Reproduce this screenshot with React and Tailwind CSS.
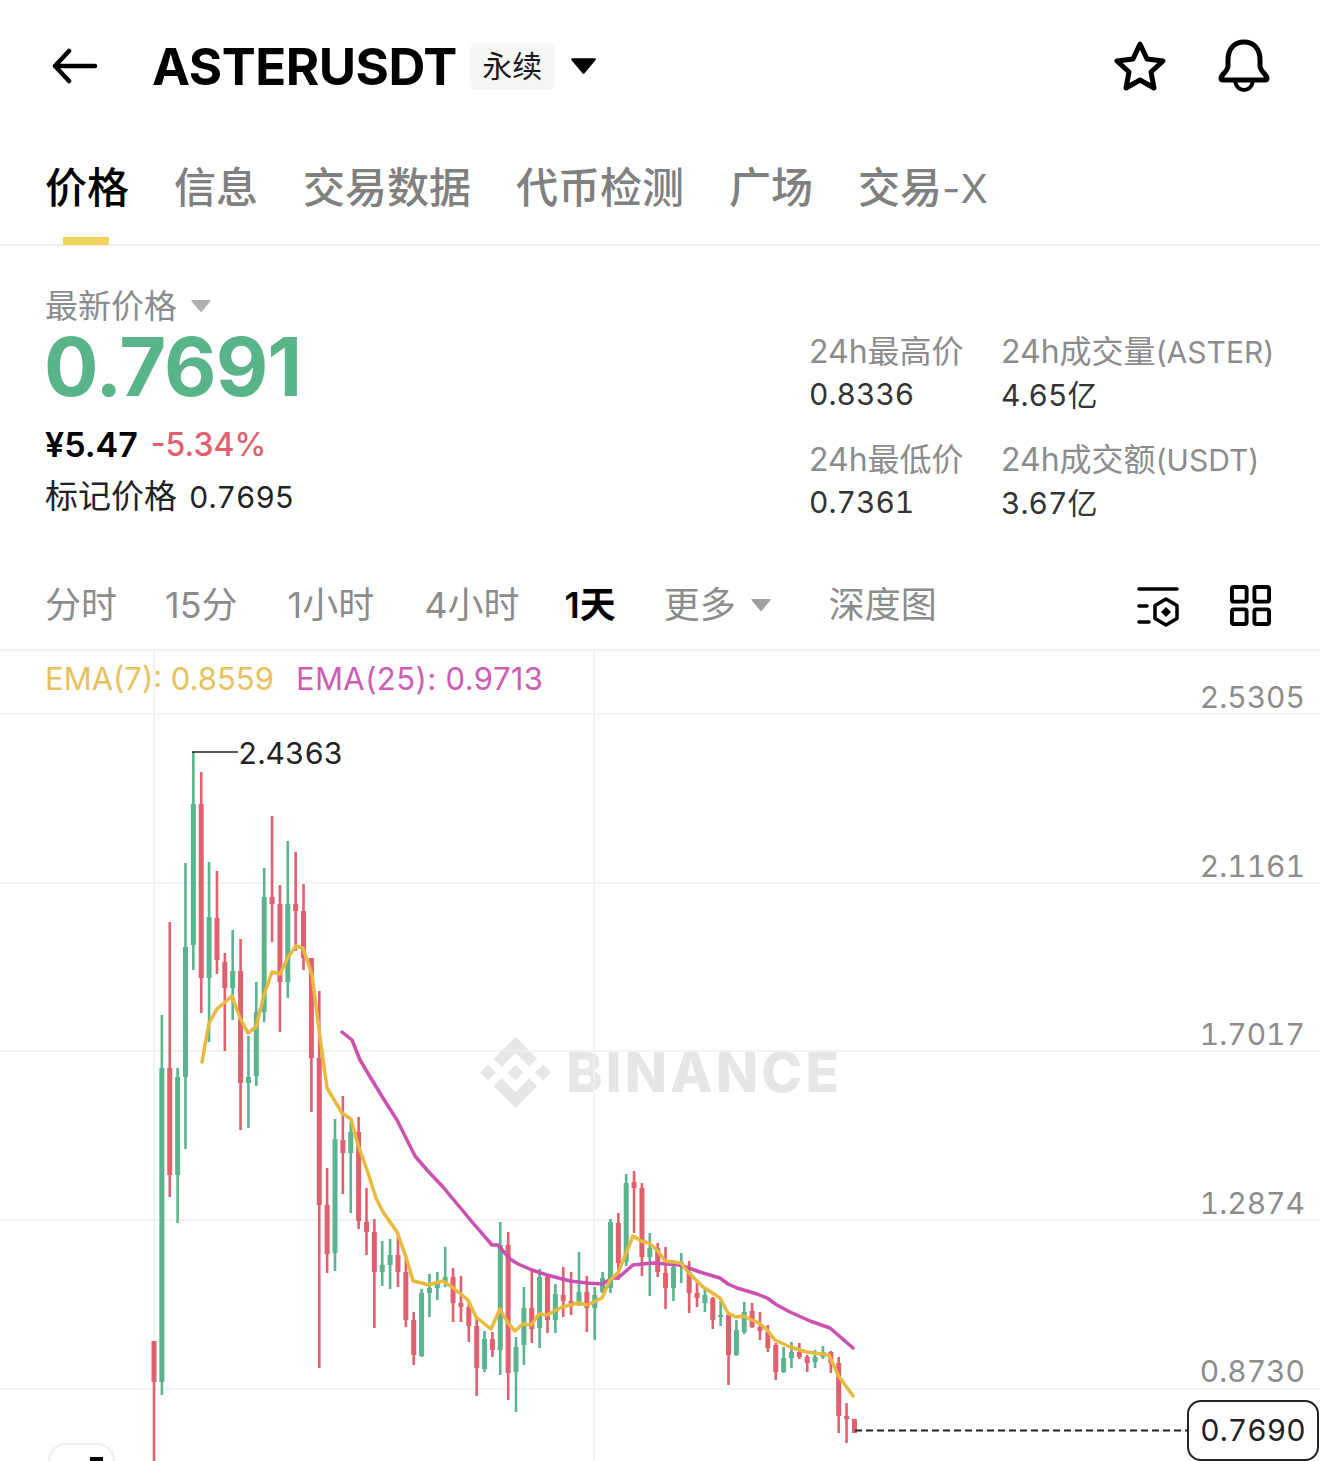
import React from "react";
import { SiBinance } from "react-icons/si";

const GREEN = "#5AB48E";
const RED = "#E0606E";

// [up?, wick top, body top, body bottom, wick bottom] in page pixels
const candles = [
  [0, 1341, 1341, 1382, 1480], [1, 1015, 1068, 1382, 1395], [0, 922, 1068, 1175, 1197], [1, 1068, 1077, 1175, 1223],
  [1, 863, 947, 1077, 1149], [1, 752, 804, 945, 970], [0, 772, 804, 978, 1013], [1, 862, 917, 978, 1042],
  [0, 871, 918, 960, 974], [0, 953, 962, 988, 1051], [1, 930, 971, 988, 1020], [0, 939, 971, 1083, 1130],
  [1, 1036, 1077, 1083, 1128], [1, 982, 1012, 1076, 1086], [1, 868, 897, 1012, 1022], [0, 816, 897, 904, 942],
  [0, 885, 904, 982, 1032], [1, 841, 904, 982, 998], [0, 852, 904, 911, 951], [0, 884, 911, 958, 970],
  [0, 958, 958, 1058, 1112], [0, 991, 1058, 1205, 1368], [0, 1168, 1205, 1254, 1273], [1, 1119, 1139, 1253, 1271],
  [0, 1096, 1140, 1153, 1194], [1, 1122, 1132, 1153, 1213], [0, 1117, 1132, 1221, 1229], [0, 1188, 1222, 1232, 1255],
  [0, 1219, 1232, 1272, 1328], [1, 1241, 1265, 1272, 1286], [1, 1239, 1255, 1265, 1289], [0, 1232, 1255, 1272, 1287],
  [0, 1258, 1272, 1320, 1327], [0, 1312, 1320, 1355, 1365], [1, 1289, 1293, 1356, 1357], [1, 1274, 1288, 1293, 1317],
  [1, 1272, 1282, 1288, 1300], [1, 1247, 1277, 1282, 1287], [0, 1268, 1277, 1303, 1322], [0, 1276, 1303, 1307, 1322],
  [0, 1302, 1307, 1326, 1342], [0, 1318, 1326, 1368, 1396], [1, 1331, 1339, 1369, 1372], [0, 1332, 1339, 1350, 1357],
  [1, 1222, 1245, 1350, 1375], [0, 1232, 1245, 1373, 1400], [1, 1337, 1347, 1372, 1412], [1, 1287, 1308, 1345, 1365],
  [0, 1270, 1308, 1329, 1343], [1, 1269, 1277, 1328, 1348], [0, 1275, 1277, 1320, 1333], [1, 1284, 1294, 1320, 1333],
  [0, 1267, 1295, 1301, 1317], [0, 1272, 1301, 1305, 1315], [1, 1252, 1292, 1305, 1306], [0, 1276, 1292, 1308, 1332],
  [1, 1287, 1295, 1308, 1340], [1, 1272, 1278, 1292, 1293], [1, 1219, 1222, 1288, 1293], [0, 1213, 1223, 1263, 1280],
  [1, 1174, 1183, 1262, 1266], [0, 1171, 1182, 1188, 1233], [0, 1183, 1188, 1257, 1276], [1, 1233, 1248, 1257, 1296],
  [0, 1243, 1248, 1272, 1277], [0, 1247, 1273, 1288, 1309], [1, 1260, 1267, 1288, 1301], [1, 1253, 1262, 1267, 1283],
  [0, 1261, 1272, 1293, 1313], [0, 1282, 1293, 1298, 1307], [1, 1287, 1295, 1303, 1312], [0, 1297, 1298, 1320, 1329],
  [1, 1301, 1315, 1316, 1326], [0, 1313, 1315, 1355, 1385], [1, 1320, 1330, 1355, 1356], [1, 1302, 1312, 1332, 1334],
  [0, 1303, 1311, 1327, 1328], [0, 1312, 1327, 1331, 1340], [0, 1325, 1332, 1348, 1352], [0, 1343, 1345, 1372, 1380],
  [1, 1347, 1358, 1372, 1373], [1, 1342, 1352, 1358, 1368], [0, 1343, 1352, 1357, 1359], [0, 1355, 1357, 1363, 1372],
  [1, 1350, 1357, 1362, 1368], [1, 1346, 1352, 1357, 1359], [0, 1351, 1352, 1363, 1373], [0, 1357, 1363, 1416, 1433],
  [0, 1403, 1416, 1419, 1443], [0, 1419, 1419, 1433, 1433],
];

const ema7 =
  "202,1062 209,1023 217,1009 232,996 240,1018 248,1033 256,1027 264,995 272,972 280,974 288,957 296,946 303,948 312,975 320,1037 327,1088 342,1113 351,1119 358,1145 367,1170 376,1198 383,1212 397,1232 406,1257 413,1281 422,1283 428,1285 443,1281 452,1287 468,1300 476,1317 491,1329 500,1309 508,1323 515,1331 523,1324 531,1325 539,1314 547,1315 562,1307 578,1303 587,1305 602,1298 610,1280 618,1273 633,1236 641,1241 649,1243 657,1250 665,1261 681,1263 688,1272 703,1287 720,1298 728,1313 736,1317 743,1316 759,1323 767,1330 775,1340 790,1347 807,1352 829,1355 838,1375 853,1396";

const ema25 =
  "342,1032 352,1040 360,1060 372,1080 383,1098 397,1120 407,1140 415,1156 427,1170 443,1187 458,1205 473,1223 492,1245 498,1245 510,1259 518,1264 532,1270 547,1275 570,1281 587,1283 602,1284 613,1278 618,1278 633,1265 653,1263 680,1265 703,1273 720,1278 728,1284 737,1288 757,1294 767,1298 777,1305 790,1312 810,1321 830,1328 853,1348";

const tabs = ["信息", "交易数据", "代币检测", "广场"];

function Caret({ className }) {
  return (
    <svg viewBox="0 0 24 16" className={className}>
      <path d="M2 2h20L12 14z" fill="currentColor" stroke="currentColor" strokeWidth="2" strokeLinejoin="round" />
    </svg>
  );
}

function Stat({ label, suffix, value }) {
  return (
    <div className="flex flex-col">
      <span className="text-[32px] leading-[43px] text-[#8c8c8c] whitespace-nowrap">
        {label}
        {suffix && <span className="text-[30px]">{suffix}</span>}
      </span>
      <span className="text-[30px] leading-[43px] tabular-nums text-[#333]">{value}</span>
    </div>
  );
}

function CandleChart() {
  return (
    <svg viewBox="0 651 1320 810" className="absolute inset-0 w-full h-full">
      {[714, 883, 1051, 1220, 1389].map((y) => (
        <line key={y} x1="0" x2="1320" y1={y} y2={y} stroke="#efefef" strokeWidth="1.5" />
      ))}
      {[154, 594].map((x) => (
        <line key={x} x1={x} x2={x} y1="651" y2="1461" stroke="#f0f0f0" strokeWidth="1.5" />
      ))}
      {candles.map((c, i) => {
        const x = 154 + 7.87 * i;
        const color = c[0] ? GREEN : RED;
        return (
          <g key={i} fill={color}>
            <rect x={x - 1.3} y={c[1]} width="2.6" height={c[4] - c[1]} />
            <rect x={x - 2.5} y={c[2]} width="5" height={Math.max(c[3] - c[2], 2)} />
          </g>
        );
      })}
      <polyline points={ema25} fill="none" stroke="#CB50B0" strokeWidth="3.5" strokeLinejoin="round" strokeLinecap="round" />
      <polyline points={ema7} fill="none" stroke="#E8B93E" strokeWidth="3.5" strokeLinejoin="round" strokeLinecap="round" />
      <line x1="192" x2="238" y1="752" y2="752" stroke="#222" strokeWidth="1.5" />
      <line x1="855" x2="1187" y1="1430.5" y2="1430.5" stroke="#222" strokeWidth="2" strokeDasharray="7 4" />
    </svg>
  );
}

export default function App() {
  return (
    <div className="w-[1320px] h-[1461px] overflow-hidden bg-white flex flex-col font-[Inter,'Noto_Sans_CJK_SC',sans-serif]">
      <div className="h-[132px] flex items-center pl-[52px] pr-[50px] shrink-0">
        <svg viewBox="0 0 46 36" className="w-[46px] h-[36px] text-black" fill="none" stroke="currentColor" strokeWidth="4.5" strokeLinecap="round" strokeLinejoin="round">
          <path d="M43 18H3M17 3L3 18l14 15" />
        </svg>
        <span className="ml-[54px] text-[51px] leading-none font-bold text-black tracking-[-0.5px]">ASTERUSDT</span>
        <span className="ml-[13px] w-[85px] h-[47px] rounded-md bg-[#f6f6f6] flex items-center justify-center text-[30px] text-[#1a1a1a]">永续</span>
        <Caret className="ml-[15px] w-[27px] h-[18px] text-black" />
        <svg viewBox="0 0 52 50" className="ml-auto w-[52px] h-[50px] text-black" fill="none" stroke="currentColor" strokeWidth="5" strokeLinejoin="round">
          <path d="M26 3l7 15 16 2-12 11 3 16-14-8-14 8 3-16L3 20l16-2z" />
        </svg>
        <svg viewBox="0 0 52 54" className="ml-[52px] w-[52px] h-[54px] text-black" fill="none" stroke="currentColor" strokeWidth="5" strokeLinejoin="round" strokeLinecap="round">
          <path d="M10 27V21C10 10 16 3 26 3s16 7 16 18v6c0 5 7 9 7 12 0 1.500-1 2-2 2H5c-1 0-2-.5-2-2 0-3 7-7 7-12z" />
          <path d="M17 42c1 6 5 9 9 9s8-3 9-9" strokeWidth="4" />
        </svg>
      </div>

      <div className="h-[114px] shrink-0 border-b-2 border-[#f1f1f1] flex items-start pl-[45px] gap-[45px] pt-[28px] text-[42px] leading-[56px] font-medium text-[#808080]">
        <div className="relative text-black">
          价格
          <div className="absolute left-[18px] top-[77px] w-[46px] h-[8px] bg-[#F0D45C]" />
        </div>
        {tabs.map((t) => (
          <span key={t} className="whitespace-nowrap">{t}</span>
        ))}
        <span className="whitespace-nowrap">
          交易<span className="text-[40px] font-normal">-X</span>
        </span>
      </div>

      <div className="h-[330px] shrink-0 pl-[45px] flex justify-between">
        <div className="flex flex-col pt-[38px]">
          <div className="flex items-center gap-[13px] text-[33px] leading-[44px] text-[#8c8c8c]">
            最新价格
            <Caret className="w-[22px] h-[14px] text-[#b0b0b0]" />
          </div>
          <div className="text-[81px] leading-[76px] mt-[1px] ml-[-1px] font-bold text-[#5AB48A] tracking-[-1px]">0.7691</div>
          <div className="flex gap-[13px] text-[32px] leading-[44px] mt-[18px]">
            <span className="text-[34px] font-semibold text-black">¥5.47</span>
            <span className="font-medium text-[#E0606E]">-5.34%</span>
          </div>
          <div className="text-[33px] leading-[44px] text-[#222] mt-[7px] whitespace-nowrap">
            标记价格<span className="ml-[12px] text-[30px] tabular-nums">0.7695</span>
          </div>
        </div>
        <div className="w-[511px] grid grid-cols-[192px_1fr] gap-y-[21px] pt-[84px] content-start">
          <Stat label="24h最高价" value="0.8336" />
          <Stat label="24h成交量" suffix="(ASTER)" value="4.65亿" />
          <Stat label="24h最低价" value="0.7361" />
          <Stat label="24h成交额" suffix="(USDT)" value="3.67亿" />
        </div>
      </div>

      <div className="h-[75px] shrink-0 border-b-2 border-[#f1f1f1] flex items-center pb-[15px] pl-[45px] pr-[49px] text-[36px] text-[#8c8c8c] whitespace-nowrap">
        <span>分时</span>
        <span className="ml-[48px]">15分</span>
        <span className="ml-[50px]">1小时</span>
        <span className="ml-[50px]">4小时</span>
        <span className="ml-[45px] font-semibold text-black">1天</span>
        <span className="ml-[48px]">更多</span>
        <Caret className="ml-[14px] w-[22px] h-[14px] text-[#a0a0a0]" />
        <span className="ml-[57px]">深度图</span>
        <svg viewBox="0 0 44 44" className="ml-auto w-[44px] h-[44px] text-black" fill="none" stroke="currentColor" strokeWidth="3.500" strokeLinecap="round" strokeLinejoin="round">
          <path d="M3 6h38M3 23h8M3 39h10" />
          <path d="M30 16l11 6.500v13L30 42l-11-6.500v-13z" />
          <path d="M30 24l5 5-5 5-5-5z" fill="currentColor" stroke="none" />
        </svg>
        <svg viewBox="0 0 42 42" className="ml-[50px] mt-[1px] w-[41px] h-[41px] text-black" fill="none" stroke="currentColor" strokeWidth="4" strokeLinejoin="round">
          <rect x="2" y="2" width="15" height="15" rx="2" />
          <rect x="25" y="2" width="15" height="15" rx="2" />
          <rect x="2" y="25" width="15" height="15" rx="2" />
          <rect x="25" y="25" width="15" height="15" rx="2" />
        </svg>
      </div>

      <div className="relative flex-1 overflow-hidden">
        <div className="absolute left-[480px] top-[386px] flex items-center gap-[15px] text-[#e6e6e6]">
          <SiBinance size={71} />
          <span className="text-[55px] leading-none font-extrabold tracking-[3.3px]">BINANCE</span>
        </div>
        <CandleChart />
        <div className="absolute left-[45px] top-[6px] flex gap-[22px] text-[31px] leading-[44px] whitespace-nowrap">
          <span className="text-[#E8C15C]">EMA(7): 0.8559</span>
          <span className="text-[#CE5CB6] tracking-[0.4px]">EMA(25): 0.9713</span>
        </div>
        <span className="absolute left-[238px] top-[80px] text-[30px] leading-[44px] tabular-nums text-[#222]">2.4363</span>
        {[
          ["2.5305", 24],
          ["2.1161", 193],
          ["1.7017", 361],
          ["1.2874", 530],
          ["0.8730", 698],
        ].map(([v, top]) => (
          <span key={v} style={{ top }} className="absolute right-[15px] text-[30px] leading-[44px] tabular-nums text-[#8c8c8c]">{v}</span>
        ))}
        <div className="absolute left-[1187px] top-[749px] w-[132px] h-[61px] border-2 border-[#222] rounded-[14px] flex items-center justify-center text-[30px] tabular-nums text-[#222] bg-white">
          0.7690
        </div>
        <div className="absolute left-[48px] top-[792px] w-[67px] h-[60px] border-2 border-[#eeeeee] rounded-[18px] bg-white">
          <div className="absolute left-[40px] top-[12px] w-[13px] h-[4px] bg-black" />
        </div>
      </div>
    </div>
  );
}
